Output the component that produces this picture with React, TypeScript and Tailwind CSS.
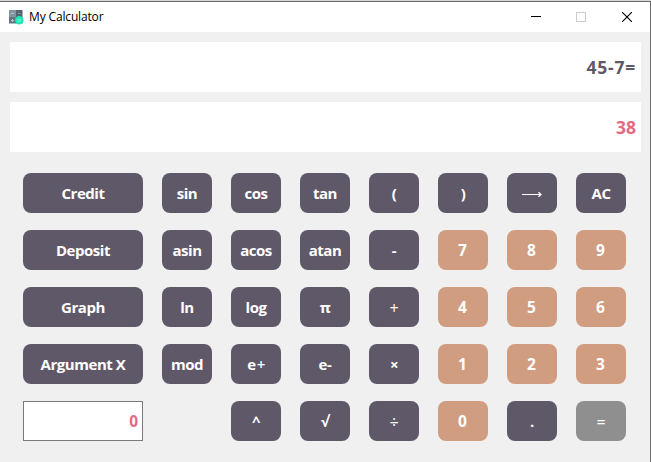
type Key = { label: string; tone?: 'dark' | 'tan' | 'gray'; text?: string };

const thin = 'pt-px font-normal text-base tracking-normal';
const digit = 'pt-[2px] font-bold text-[15.5px] tracking-normal pr-px';

const rows: (Key | null)[][] = [
  [
    { label: 'sin' },
    { label: 'cos' },
    { label: 'tan' },
    { label: '(' },
    { label: ')' },
    { label: '⟶' },
    { label: 'AC' },
  ],
  [
    { label: 'asin' },
    { label: 'acos' },
    { label: 'atan' },
    { label: '-' },
    { label: '7', tone: 'tan', text: digit },
    { label: '8', tone: 'tan', text: digit },
    { label: '9', tone: 'tan', text: digit },
  ],
  [
    { label: 'ln' },
    { label: 'log' },
    { label: 'π' },
    { label: '+', text: thin },
    { label: '4', tone: 'tan', text: digit },
    { label: '5', tone: 'tan', text: digit },
    { label: '6', tone: 'tan', text: digit },
  ],
  [
    { label: 'mod' },
    { label: 'e+' },
    { label: 'e-' },
    { label: '×' },
    { label: '1', tone: 'tan', text: digit },
    { label: '2', tone: 'tan', text: digit },
    { label: '3', tone: 'tan', text: digit },
  ],
  [
    null,
    { label: '^' },
    { label: '√' },
    { label: '÷', text: thin },
    { label: '0', tone: 'tan', text: digit },
    { label: '.' },
    { label: '=', tone: 'gray', text: thin },
  ],
];

const sideLabels = ['Credit', 'Deposit', 'Graph', 'Argument X'];

const tones = {
  dark: 'bg-[#5f5868]',
  tan: 'bg-[#d09d80]',
  gray: 'bg-[#8f8f8f]',
};

function ArrowIcon() {
  return (
    <svg width="20" height="9" viewBox="0 0 20 9" fill="none" stroke="white" strokeWidth="1" className="mt-[2px]">
      <path d="M0 4.5H19" />
      <path d="M16.5 2.2L19 4.5L16.5 6.8" strokeWidth="1.3" />
    </svg>
  );
}

function CalcKey({ item, wide }: { item: Key; wide?: boolean }) {
  return (
    <button
      className={`flex h-10 items-center justify-center rounded-lg leading-none text-white ${
        wide ? 'w-[120px]' : 'w-[50px]'
      } ${tones[item.tone ?? 'dark']} ${item.text ?? 'pt-px font-bold'}`}
    >
      {item.label === '⟶' ? (
        <ArrowIcon />
      ) : item.label === 'e+' ? (
        <span>
          e<span className="ml-px font-semibold">+</span>
        </span>
      ) : (
        item.label
      )}
    </button>
  );
}

function AppIcon() {
  return (
    <svg width="15" height="15" viewBox="0 0 15 15" fill="none">
      <rect width="7" height="7" fill="#8295a0" />
      <rect x="7" width="6.5" height="7" fill="#536671" />
      <rect y="7" width="7" height="6.5" fill="#607682" />
      <rect x="7" y="7" width="6.5" height="6.5" fill="#465a65" />
      <path d="M2 3.5H5M2 10.5H5M3.5 9V12" stroke="#b9c6cd" />
      <path d="M9 3.5H11.5" stroke="#8496a0" />
      <circle cx="10.3" cy="10.3" r="4.2" fill="#1de9b6" />
      <path d="M8.7 9.6H11.9M8.7 11.1H11.9" stroke="#8bf5da" strokeWidth="0.8" />
    </svg>
  );
}

export default function App() {
  return (
    <div className="flex h-[462px] w-[651px] flex-col overflow-hidden border-t border-[#d9d9d9] bg-[#f0f0f0] font-['Open_Sans','Noto_Sans',sans-serif] text-[15px] font-bold tracking-[-0.45px]">
      <div className="flex flex-1 flex-col border-t border-r border-[#6b6b6b]">
        <header className="flex h-[30px] shrink-0 items-center bg-white pl-[9px] font-normal text-black">
          <AppIcon />
          <span className="ml-[5px] text-[12px] leading-none tracking-[-0.15px]">My Calculator</span>
          <div className="mr-[18px] ml-auto flex items-center">
            <svg width="10" height="10" viewBox="0 0 10 10" stroke="black" shapeRendering="crispEdges">
              <path d="M0 4.5H10" />
            </svg>
            <svg width="10" height="10" viewBox="0 0 10 10" fill="none" stroke="#cccccc" shapeRendering="crispEdges" className="ml-[35px]">
              <rect x="0.5" y="0.5" width="9" height="9" />
            </svg>
            <svg width="10" height="10" viewBox="0 0 10 10" stroke="black" className="ml-9">
              <path d="M0 0L10 10M10 0L0 10" strokeWidth="1.1" />
            </svg>
          </div>
        </header>

        <div className="flex flex-col gap-[10px] pt-[10px] pr-[9px] pl-[10px] text-[17.5px]">
          <div className="flex h-[50px] items-center justify-end bg-white pt-[2px] pr-[5px] leading-none tracking-[0.75px] text-[#5f5868]">
            45-7=
          </div>
          <div className="flex h-[50px] items-center justify-end bg-white pt-[2px] pr-[5px] leading-none tracking-normal text-[#e5697f]">
            38
          </div>
        </div>

        <main className="mt-[21px] ml-[23px] flex gap-[19px]">
          <div className="flex flex-col gap-[17px]">
            {sideLabels.map((label) => (
              <CalcKey key={label} item={{ label }} wide />
            ))}
            <div className="flex h-10 w-[120px] items-center justify-end border border-[#7a7a7a] bg-white pt-[2px] pr-1 text-[15.5px] leading-none tracking-normal text-[#e5697f]">
              0
            </div>
          </div>
          <div className="grid grid-cols-[repeat(7,50px)] gap-x-[19px] gap-y-[17px]">
            {rows.flat().map((item, i) => (item ? <CalcKey key={i} item={item} /> : <div key={i} />))}
          </div>
        </main>
      </div>
    </div>
  );
}
